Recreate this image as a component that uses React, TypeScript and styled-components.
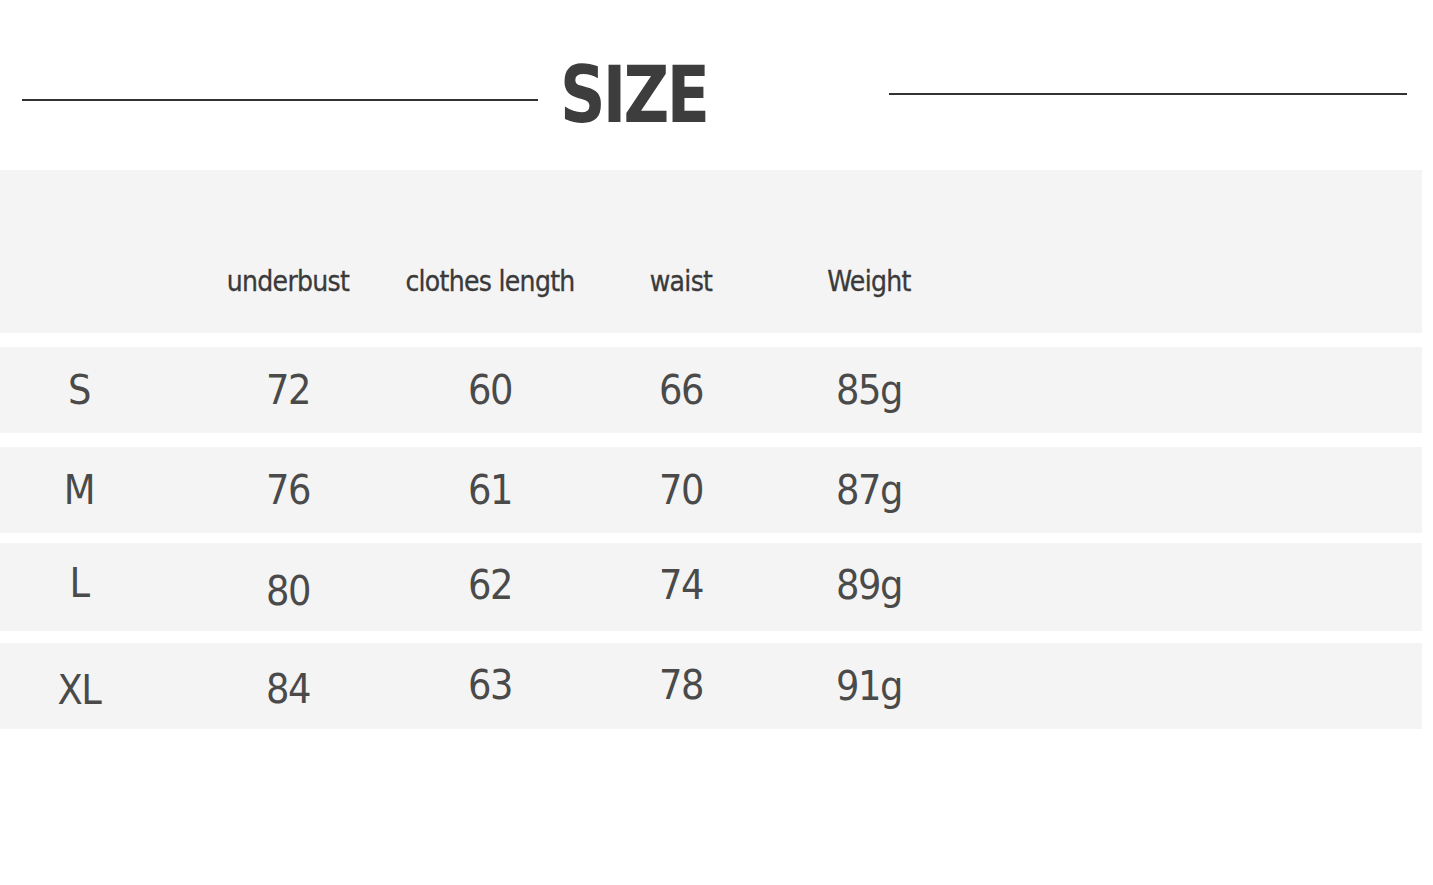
import styled, { createGlobalStyle } from "styled-components"

const GlobalStyle = createGlobalStyle`
    html, body {
        margin: 0;
        padding: 0;
        background: #fff;
    }
    body {
        width: 1433px;
        height: 885px;
        overflow: hidden;
        font-family: "DejaVu Sans Condensed", "DejaVu Sans", sans-serif;
        color: #444;
    }
`

const Page = styled.div`
    width: 1433px;
    padding-top: 52px;
`

const TitleBar = styled.div`
    display: flex;
    align-items: center;
    height: 96px;
`

const Rule = styled.div<{ $left: number; $width: number; $shift: number }>`
    flex: none;
    margin-left: ${p => p.$left}px;
    width: ${p => p.$width}px;
    height: 2px;
    background: #333;
    transform: translateY(${p => p.$shift}px);
`

const Title = styled.h1`
    margin: 0 0 0 22px;
    font-family: "DejaVu Sans Condensed", "DejaVu Sans", sans-serif;
    font-weight: 700;
    font-size: 78px;
    line-height: 1;
    color: #3d3d3d;
    letter-spacing: -3px;
    width: 145px;
    transform: translateY(-5px) scaleX(0.9);
    transform-origin: left center;
`

const Table = styled.div`
    margin-top: 22px;
    width: 1422px;
    display: flex;
    flex-direction: column;
`

const Row = styled.div<{ $height: number; $gap: number }>`
    display: grid;
    grid-template-columns: 158px 260px 144px 238px 138px;
    align-items: center;
    height: ${p => p.$height}px;
    margin-bottom: ${p => p.$gap}px;
    background: #f4f4f4;
`

const HeadCell = styled.div`
    justify-self: center;
    font-size: 28px;
    letter-spacing: -0.7px;
    color: #3a3a3a;
    padding-top: 60px;
    white-space: nowrap;
    -webkit-text-stroke: 0.3px #3a3a3a;
`

const Cell = styled.div<{ $dy?: number }>`
    justify-self: center;
    font-size: 41px;
    color: #4a4a4a;
    letter-spacing: -1.5px;
    transform: translateY(${p => p.$dy || 0}px);
`

const headers = ["", "underbust", "clothes length", "waist", "Weight"]

const rows = [
    { cells: ["S", "72", "60", "66", "85g"], height: 86, gap: 14, dy: [0, 0, 0, 0, 0] },
    { cells: ["M", "76", "61", "70", "87g"], height: 86, gap: 10, dy: [0, 0, 0, 0, 0] },
    { cells: ["L", "80", "62", "74", "89g"], height: 88, gap: 12, dy: [-4, 4, -2, -2, -2] },
    { cells: ["XL", "84", "63", "78", "91g"], height: 86, gap: 0, dy: [4, 3, -1, -1, 0] },
]

export default function App() {
    return (
        <>
            <GlobalStyle />
            <Page>
                <TitleBar>
                    <Rule $left={22} $width={516} $shift={0} />
                    <Title>SIZE</Title>
                    <Rule $left={184} $width={518} $shift={-6} />
                </TitleBar>
                <Table>
                    <Row $height={163} $gap={14}>
                        {headers.map((h, i) => <HeadCell key={i}>{h}</HeadCell>)}
                    </Row>
                    {rows.map(r => (
                        <Row key={r.cells[0]} $height={r.height} $gap={r.gap}>
                            {r.cells.map((c, i) => <Cell key={i} $dy={r.dy[i]}>{c}</Cell>)}
                        </Row>
                    ))}
                </Table>
            </Page>
        </>
    )
}
